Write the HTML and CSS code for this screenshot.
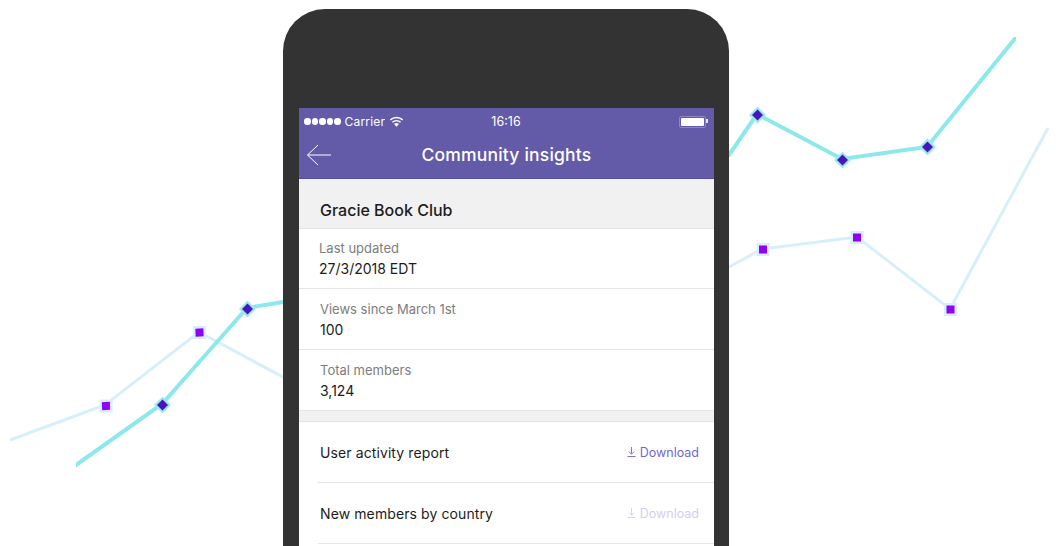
FILE: index.html
```html
<!DOCTYPE html>
<html lang="en">
<head>
    <meta charset="UTF-8">
    <meta name="viewport" content="width=device-width, initial-scale=1.0">
    <title>Community insights</title>
    <link rel="stylesheet" href="styles.css">
</head>
<body>
    <!-- Chart behind the phone -->
    <svg class="chart" width="1056" height="546" viewBox="0 0 1056 546">
        <clipPath id="chart-clip"><rect x="76" y="37" width="940" height="440"/></clipPath>
        <polyline class="line-light" points="10,440 105,405 199,332 283,377 500,380 729,267 762,249 857,237 950,309 1048,128"/>
        <polyline class="line-teal" clip-path="url(#chart-clip)" points="62,475 162,404 247,308 283,302 500,300 729,155 757,114 842,159 927,147 1026,25"/>
        <g class="dot-light">
            <rect x="99.500" y="399.500" width="13" height="13"/>
            <rect x="193" y="326" width="13" height="13"/>
            <rect x="756.500" y="243" width="13" height="13"/>
            <rect x="850.500" y="231" width="13" height="13"/>
            <rect x="944" y="303" width="13" height="13"/>
        </g>
        <g class="dot-violet">
            <rect x="102" y="402" width="8" height="8" transform="rotate(-2 106 406)"/>
            <rect x="195.500" y="328.500" width="8" height="8" transform="rotate(-2 199.500 332.500)"/>
            <rect x="759" y="245.500" width="8" height="8"/>
            <rect x="853" y="233.500" width="8" height="8"/>
            <rect x="946.500" y="305.500" width="8" height="8"/>
        </g>
        <g class="dot-teal">
            <path d="M162.500 396.500l8.500 8.500-8.500 8.500-8.500-8.500z"/>
            <path d="M247.500 300.500l8.500 8.500-8.500 8.500-8.500-8.500z"/>
            <path d="M757.500 106.500l8.500 8.500-8.500 8.500-8.500-8.500z"/>
            <path d="M842.500 151.500l8.500 8.500-8.500 8.500-8.500-8.500z"/>
            <path d="M927.500 138.500l8.500 8.500-8.500 8.500-8.500-8.500z"/>
        </g>
        <g class="dot-blue">
            <path d="M162.500 399.500l5.500 5.500-5.500 5.500-5.500-5.500z"/>
            <path d="M247.500 303.500l5.500 5.500-5.500 5.500-5.500-5.500z"/>
            <path d="M757.500 109.500l5.500 5.500-5.500 5.500-5.500-5.500z"/>
            <path d="M842.500 154.500l5.500 5.500-5.500 5.500-5.500-5.500z"/>
            <path d="M927.500 141.500l5.500 5.500-5.500 5.500-5.500-5.500z"/>
        </g>
    </svg>

    <!-- Phone -->
    <div class="phone">
        <div class="screen">
            <header class="appbar">
                <div class="status">
                    <div class="status-left">
                        <span class="signal"><i></i><i></i><i></i><i></i><i></i></span>
                        <span>Carrier</span>
                        <svg class="wifi" width="15" height="11" viewBox="0 0 14 10">
                            <path d="M7 10L4.700 7.300C6 6.100 8 6.100 9.300 7.300z" fill="#fff"/>
                            <path d="M3.200 5.700C5.400 3.700 8.600 3.700 10.800 5.700" fill="none" stroke="#fff" stroke-width="1.300"/>
                            <path d="M1.200 3.500C4.600 .5 9.400 .5 12.800 3.500" fill="none" stroke="#fff" stroke-width="1.300"/>
                        </svg>
                    </div>
                    <span class="time">16:16</span>
                    <div class="battery"><span></span></div>
                </div>
                <div class="titlebar">
                    <svg class="back" width="26" height="22" viewBox="0 0 26 22">
                        <path d="M25 11H1.500M12 1L1.500 11 12 21" fill="none" stroke="#fff" stroke-width="1"/>
                    </svg>
                    <h1>Community insights</h1>
                </div>
            </header>

            <h2 class="club">Gracie Book Club</h2>

            <section class="facts">
                <div class="fact">
                    <span class="fact-label">Last updated</span>
                    <span class="fact-value">27/3/2018 EDT</span>
                </div>
                <div class="fact">
                    <span class="fact-label">Views since March 1st</span>
                    <span class="fact-value">100</span>
                </div>
                <div class="fact">
                    <span class="fact-label">Total members</span>
                    <span class="fact-value">3,124</span>
                </div>
            </section>

            <div class="gap"></div>

            <section class="reports">
                <div class="report">
                    <span>User activity report</span>
                    <a class="download" href="#">
                        <svg width="9" height="10" viewBox="0 0 10 11"><path d="M5 0v7.500M2 5l3 3 3-3M.5 10.500h9" fill="none" stroke="currentColor"/></svg>
                        Download
                    </a>
                </div>
                <div class="report">
                    <span>New members by country</span>
                    <a class="download disabled" href="#">
                        <svg width="9" height="10" viewBox="0 0 10 11"><path d="M5 0v7.500M2 5l3 3 3-3M.5 10.500h9" fill="none" stroke="currentColor"/></svg>
                        Download
                    </a>
                </div>
            </section>
        </div>
    </div>
</body>
</html>
```

FILE: styles.css
```css
html, body {
    height: 546px;
    overflow: hidden;
}
body {
    margin: 0;
    position: relative;
    background-color: #fff;
    font-family: Inter, "Noto Sans", sans-serif;
    color: #1c1c1c;
}
.chart {
    position: absolute;
    top: 0;
    left: 0;
}
.chart polyline {
    fill: none;
}
.line-light {
    stroke: #d6effc;
    stroke-width: 3;
}
.line-teal {
    stroke: #8ce8ea;
    stroke-width: 4;
}
.dot-light {
    fill: #d6effc;
}
.dot-violet {
    fill: #9000f5;
}
.dot-teal {
    fill: #9ce9ec;
}
.dot-blue {
    fill: #4616c0;
}

/* Phone */
.phone {
    position: relative;
    box-sizing: border-box;
    width: 446px;
    height: 537px;
    margin: 9px 0 0 283px;
    padding: 99px 15px 0 16px;
    background-color: #333;
    border-radius: 42px 42px 0 0;
}
.screen {
    height: 438px;
    background-color: #fff;
    overflow: hidden;
}
.appbar {
    height: 71px;
    padding-top: 1px;
    box-sizing: border-box;
    background-color: #635aa8;
    border-bottom: 1px solid #564da0;
    color: #fff;
}
.status {
    display: grid;
    grid-template-columns: 1fr auto 1fr;
    align-items: center;
    height: 25px;
    padding: 0 6px 0 5px;
    font-size: 12px;
}
.status-left {
    display: flex;
    align-items: center;
    gap: 4px;
    letter-spacing: .2px;
}
.signal {
    display: flex;
    gap: 1px;
}
.signal i {
    width: 6.500px;
    height: 6.500px;
    border-radius: 50%;
    background-color: #fff;
}
.time {
    font-size: 12.500px;
}
.battery {
    position: relative;
    justify-self: end;
    box-sizing: border-box;
    width: 27px;
    height: 12px;
    margin-right: 2px;
    padding: 1px;
    border: 1px solid #8d86c4;
    border-radius: 2px;
}
.battery::after {
    content: "";
    position: absolute;
    top: 2px;
    right: -3px;
    width: 2px;
    height: 4px;
    background-color: #e4e2f2;
}
.battery span {
    display: block;
    height: 100%;
    background-color: #fff;
    border-radius: 1px;
}
.titlebar {
    position: relative;
    display: flex;
    justify-content: center;
    align-items: center;
    height: 33px;
    margin-top: 4px;
}
.back {
    position: absolute;
    left: 7px;
    top: 6px;
}
.titlebar h1 {
    margin: 0;
    font-size: 17.500px;
    font-weight: 500;
    letter-spacing: .2px;
}

.club {
    margin: 0;
    height: 50px;
    box-sizing: border-box;
    padding: 21px 0 0 21px;
    background-color: #f1f1f1;
    border-bottom: 1px solid #e3e3e3;
    font-size: 16px;
    line-height: 20px;
    font-weight: 500;
}
.fact {
    box-sizing: border-box;
    display: flex;
    flex-direction: column;
    height: 61px;
    padding: 12px 0 0 21px;
    border-bottom: 1px solid #e5e5e5;
}
.fact:first-child {
    height: 60px;
    padding-top: 11px;
}
.fact:first-child .fact-label,
.fact:first-child .fact-value {
    margin-left: -1px;
}
.fact-label {
    font-size: 13px;
    line-height: 17px;
    color: #7d7d7d;
}
.fact-value {
    margin-top: 3px;
    font-size: 14px;
    line-height: 18px;
    color: #1c1c1c;
}
.gap {
    box-sizing: border-box;
    height: 11px;
    background-color: #f1f1f1;
    border-bottom: 1px solid #e3e3e3;
}
.reports {
    padding-left: 19px;
}
.report {
    box-sizing: border-box;
    display: flex;
    justify-content: space-between;
    align-items: center;
    height: 61px;
    padding: 0 15px 0 2px;
    border-bottom: 1px solid #e5e5e5;
    font-size: 14px;
    letter-spacing: .1px;
}
.download {
    display: flex;
    align-items: center;
    gap: 4px;
    font-size: 12.500px;
    letter-spacing: 0;
    color: #7267d6;
    text-decoration: none;
}
.download.disabled {
    color: #d2cdf4;
}
```
